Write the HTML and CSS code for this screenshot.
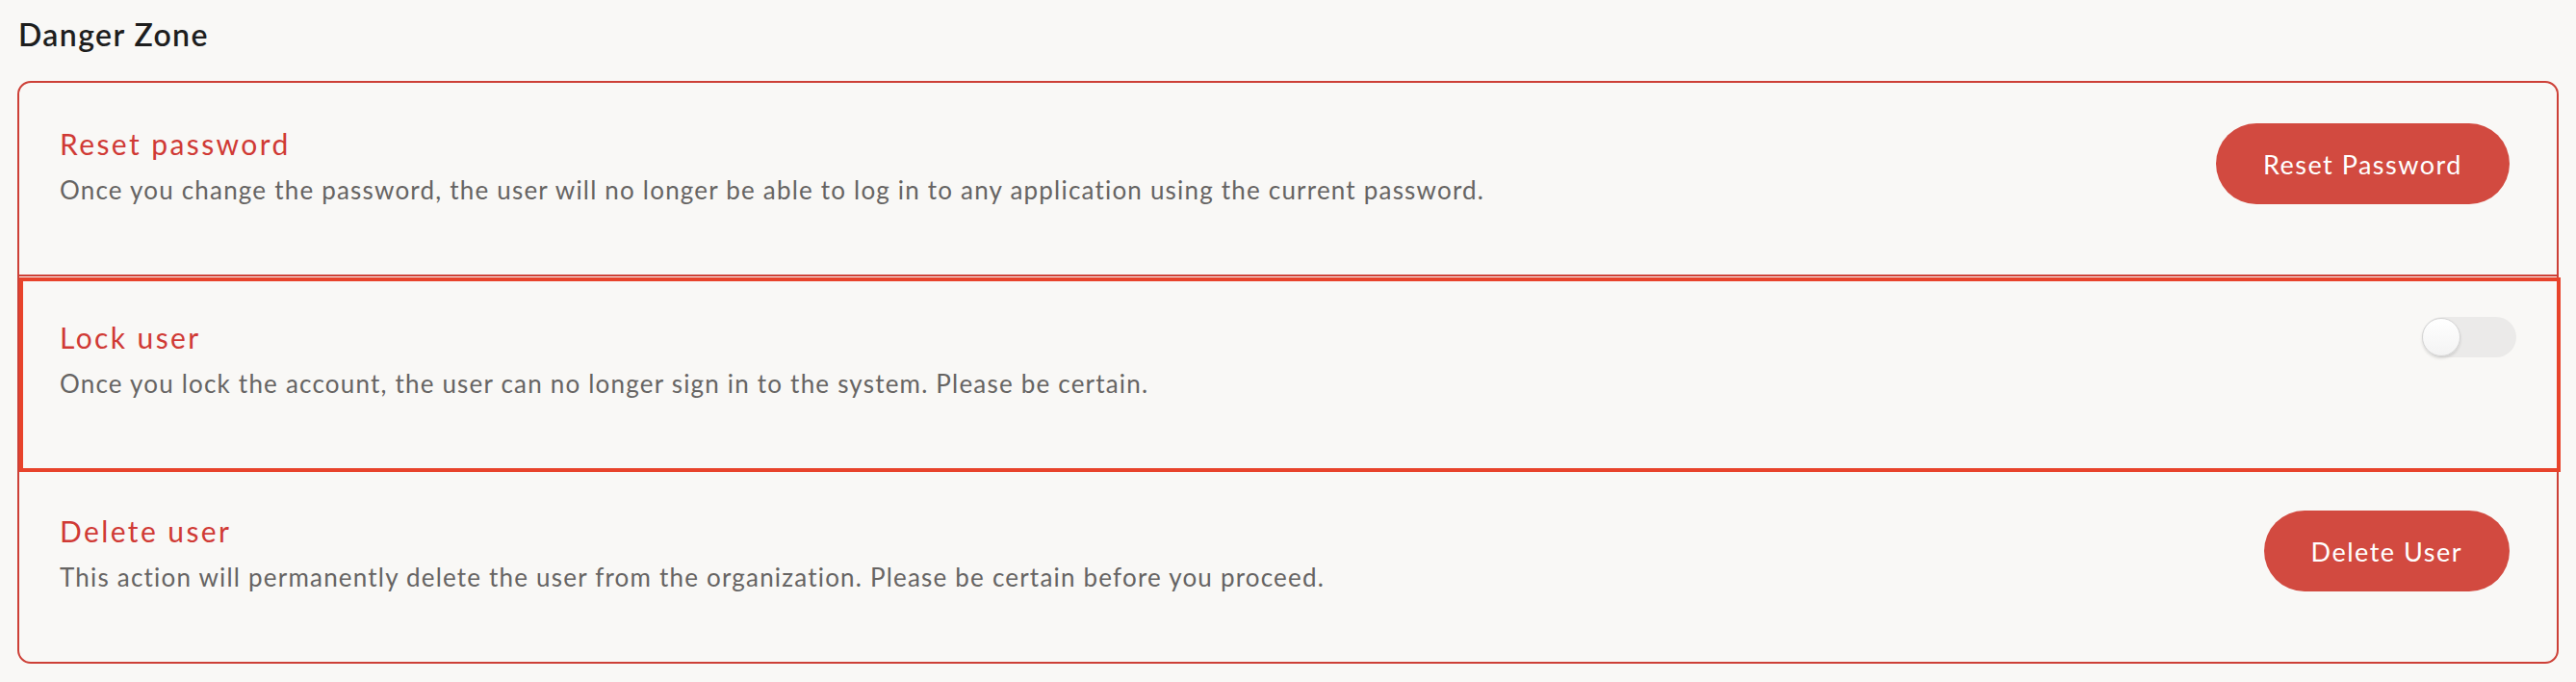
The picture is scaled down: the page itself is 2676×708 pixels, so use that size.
FILE: index.html
```html
<!DOCTYPE html>
<html lang="en">
<head>
<meta charset="utf-8">
<title>Danger Zone</title>
<link rel="stylesheet" href="styles.css">
</head>
<body>
<main class="page">
  <h2 class="section-title">Danger Zone</h2>
  <section class="danger-card">
    <div class="danger-row">
      <div class="row-text">
        <h3 class="row-title">Reset password</h3>
        <p class="row-desc">Once you change the password, the user will no longer be able to log in to any application using the current password.</p>
      </div>
      <button class="danger-btn" type="button">Reset Password</button>
    </div>
    <div class="danger-row is-focused">
      <div class="row-text">
        <h3 class="row-title">Lock user</h3>
        <p class="row-desc">Once you lock the account, the user can no longer sign in to the system. Please be certain.</p>
      </div>
      <span class="toggle" role="switch" aria-checked="false"><span class="toggle-knob"></span></span>
    </div>
    <div class="danger-row">
      <div class="row-text">
        <h3 class="row-title">Delete user</h3>
        <p class="row-desc">This action will permanently delete the user from the organization. Please be certain before you proceed.</p>
      </div>
      <button class="danger-btn" type="button">Delete User</button>
    </div>
  </section>
</main>
</body>
</html>
```
FILE: styles.css
```css
* { box-sizing: border-box; }

html, body {
  margin: 0;
  background: #f9f8f6;
}

body {
  font-family: Lato, "Noto Sans", sans-serif;
  color: #1e1e1e;
}

.page {
  padding: 16px 18px 0 18px;
}

.section-title {
  margin: 0 0 28px 1px;
  font-size: 32px;
  line-height: 40px;
  font-weight: 600;
  letter-spacing: 1.4px;
  color: #1e1e1e;
}

.danger-card {
  border: 2px solid #cd4037;
  border-radius: 14px;
}

.danger-row {
  position: relative;
  display: flex;
  align-items: flex-start;
  justify-content: space-between;
  padding: 42px 49px 70px 42px;
  border-bottom: 2px solid #cd4037;
}

.danger-row:last-child {
  border-bottom: none;
}

.danger-row.is-focused {
  padding-right: 42px;
}

.danger-row.is-focused::after {
  content: "";
  position: absolute;
  top: 1px;
  left: 0;
  right: -4px;
  bottom: -4px;
  border: 4px solid #e8432b;
  pointer-events: none;
}

.row-title {
  margin: 0 0 9px;
  font-size: 30px;
  line-height: 42px;
  font-weight: 400;
  letter-spacing: 2.4px;
  color: #d03a35;
}

.row-desc {
  margin: 0;
  font-size: 26px;
  line-height: 36px;
  letter-spacing: 1.2px;
  color: #666463;
}

.danger-btn {
  height: 84px;
  padding: 0 49px;
  border: none;
  border-radius: 42px;
  background: #d24a40;
  color: #ffffff;
  font-family: Lato, "Noto Sans", sans-serif;
  font-size: 27px;
  line-height: 1;
  letter-spacing: 1.5px;
  cursor: pointer;
}

.toggle {
  position: relative;
  display: block;
  width: 98px;
  height: 42px;
  border-radius: 21px;
  background: #ebeae9;
}

.toggle-knob {
  position: absolute;
  top: 1px;
  left: 0;
  width: 40px;
  height: 40px;
  border-radius: 50%;
  background: linear-gradient(#ffffff, #f3f3f3);
  border: 1px solid #d4d4d4;
  box-shadow: 0 2px 3px rgba(0, 0, 0, 0.12);
}
```
